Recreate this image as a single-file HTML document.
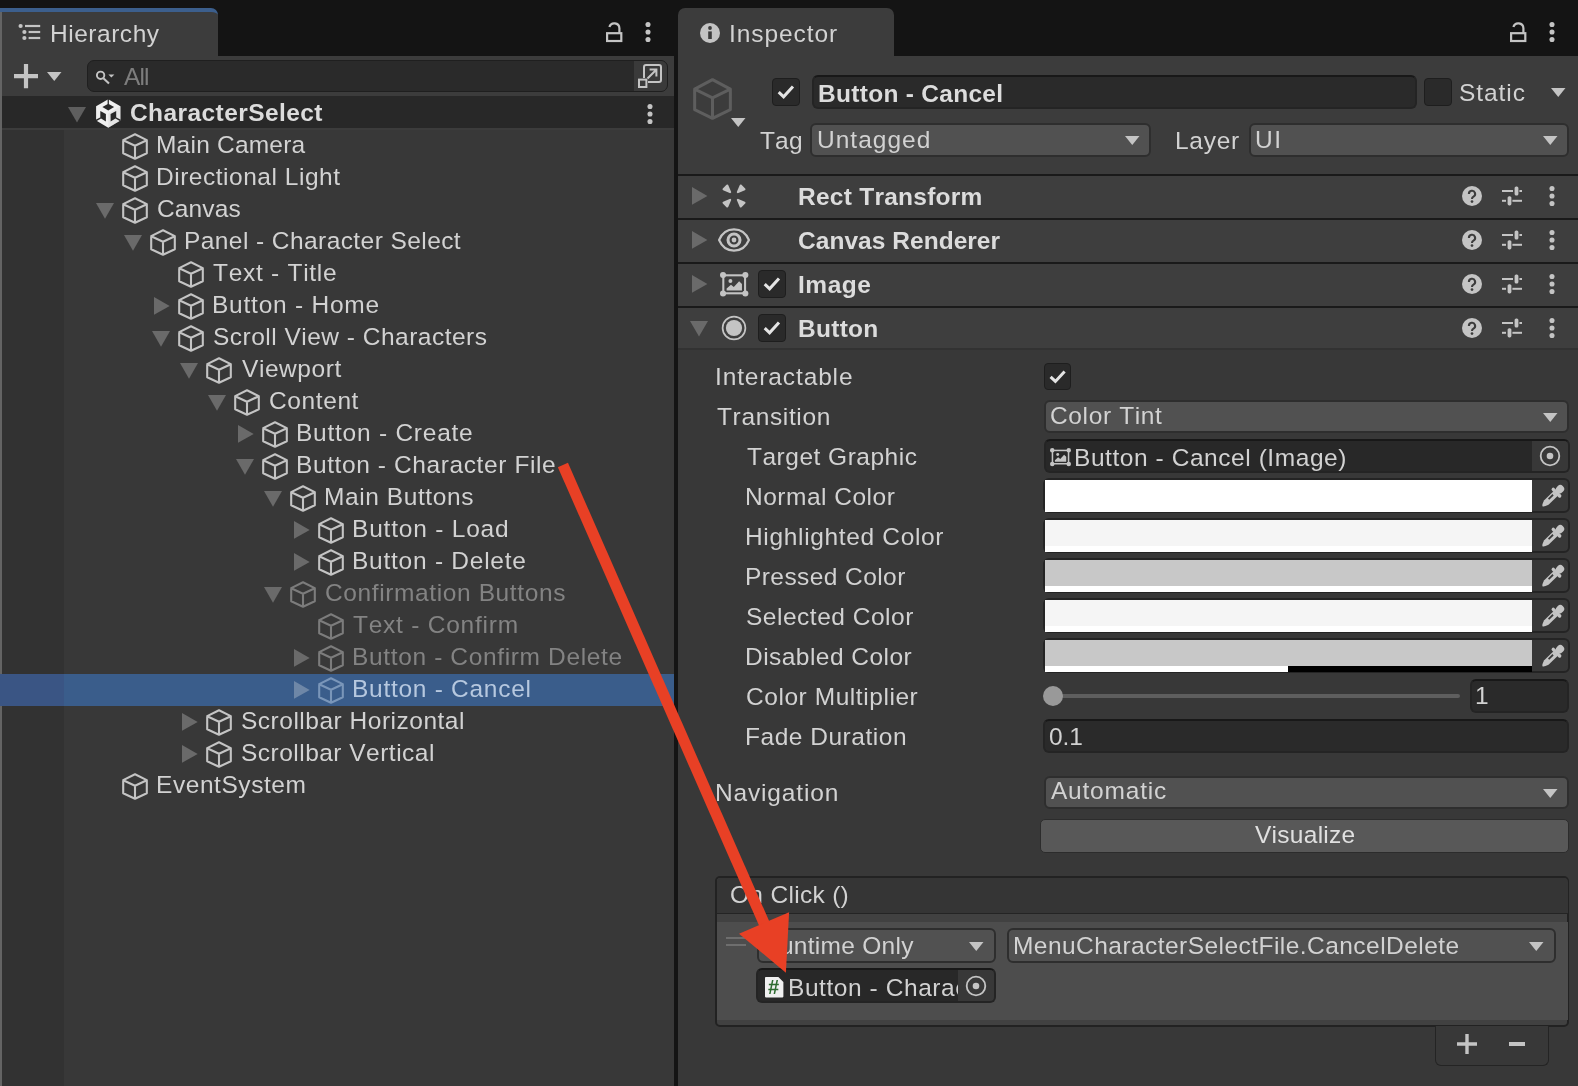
<!DOCTYPE html>
<html><head><meta charset="utf-8"><title>Unity</title>
<style>
html,body{margin:0;padding:0;background:#141414;}
body{width:1578px;height:1086px;position:relative;overflow:hidden;font-family:"Liberation Sans",sans-serif;}
.b{position:absolute;box-sizing:border-box;}
.t{position:absolute;white-space:nowrap;font-kerning:none;will-change:transform;font-family:"Liberation Sans",sans-serif;}
svg{position:absolute;overflow:visible;}
</style></head><body>
<div class="b" style="left:0px;top:0px;width:1578px;height:1086px;background:#141414;"></div>
<div class="b" style="left:0px;top:56px;width:674px;height:1030px;background:#383838;"></div>
<div class="b" style="left:0px;top:8px;width:218px;height:48px;background:#3c3c3c;border-top:4px solid #3c5f8d;border-top-right-radius:7px;"></div>
<div class="b" style="left:0px;top:56px;width:674px;height:40px;background:#3c3c3c;"></div>
<div class="b" style="left:0px;top:96px;width:674px;height:33px;background:#282828;"></div>
<div class="b" style="left:0px;top:128px;width:674px;height:2px;background:#3c3c3c;"></div>
<div class="b" style="left:0px;top:130px;width:64px;height:956px;background:#323232;"></div>
<div class="b" style="left:0px;top:12px;width:2px;height:1074px;background:#646464;"></div>
<div class="b" style="left:678px;top:56px;width:900px;height:1030px;background:#383838;"></div>
<div class="b" style="left:678px;top:8px;width:216px;height:50px;background:#3c3c3c;border-top-left-radius:7px;border-top-right-radius:7px;"></div>
<div class="b" style="left:678px;top:56px;width:900px;height:118px;background:#3c3c3c;"></div>
<svg style="left:18px;top:23px" width="24" height="18" viewBox="0 0 24 18"><g fill="#c4c4c4"><circle cx="2.6" cy="3" r="2.1"/><circle cx="6.4" cy="9" r="2.1"/><circle cx="6.4" cy="15" r="2.1"/><rect x="7" y="1.9" width="15.2" height="2.2"/><rect x="10.6" y="7.9" width="11.6" height="2.2"/><rect x="10.6" y="13.9" width="11.6" height="2.2"/></g></svg>
<div class="t" style="left:50px;top:18px;line-height:32px;font-size:24.5px;letter-spacing:0.528px;color:#d2d2d2;">Hierarchy</div>
<svg style="left:606px;top:22px" width="17" height="21" viewBox="0 0 17 21"><rect x="1.1" y="11.2" width="14.2" height="7.8" fill="none" stroke="#c4c4c4" stroke-width="2.2"/><path d="M3.4,5.0 A5.1,5.1 0 0 1 13.4,6.2 L13.4,11.2" fill="none" stroke="#c4c4c4" stroke-width="2.2"/></svg>
<svg style="left:644px;top:20px" width="8" height="24" viewBox="0 0 8 24"><circle cx="4" cy="4.5" r="2.55" fill="#c4c4c4"/><circle cx="4" cy="12" r="2.55" fill="#c4c4c4"/><circle cx="4" cy="19.5" r="2.55" fill="#c4c4c4"/></svg>
<svg style="left:14px;top:64px" width="24" height="25" viewBox="0 0 24 25"><path d="M12,0 V24.3 M0,12.2 H24" stroke="#c4c4c4" stroke-width="4.2" fill="none"/></svg>
<svg style="left:46.8px;top:72.0px" width="14.5" height="9" viewBox="0 0 14.5 9"><path d="M0,0 L14.5,0 L7.25,9 Z" fill="#c4c4c4"/></svg>
<div class="b" style="left:87px;top:60px;width:581px;height:32px;background:#2a2a2a;border:1.5px solid #1f1f1f;border-radius:7px;"></div>
<div class="b" style="left:633px;top:61px;width:34px;height:30px;background:#3a3a3a;border-left:1.5px solid #2a2a2a;border-radius:0 6px 6px 0;"></div>
<svg style="left:95px;top:66px" width="22" height="20" viewBox="0 0 22 20"><circle cx="5.6" cy="9.3" r="3.7" fill="none" stroke="#c4c4c4" stroke-width="1.9"/><path d="M8.4,12.2 L14,17.4" stroke="#c4c4c4" stroke-width="2.1"/><path d="M13.4,8.4 h6 l-3,3.2 z" fill="#c4c4c4"/></svg>
<div class="t" style="left:124px;top:61px;line-height:32px;font-size:24.5px;letter-spacing:-0.870px;color:#7d7d7d;">All</div>
<svg style="left:637px;top:63px" width="26" height="26" viewBox="0 0 26 26"><g fill="none" stroke="#c4c4c4" stroke-width="2"><path d="M7,15 V4 a2,2 0 0 1 2,-2 H22 a2,2 0 0 1 2,2 V17 a2,2 0 0 1 -2,2 H11"/><rect x="2" y="16.6" width="7.4" height="7.4"/><path d="M10.5,15.5 L19,7 M12.6,6.6 H19.4 V13.4"/></g></svg>
<svg style="left:68.0px;top:107.0px" width="18" height="15.6" viewBox="0 0 18 15.6"><path d="M0,0 L18,0 L9.0,15.6 Z" fill="#5e5e5e"/></svg>
<svg style="left:95.7px;top:99.3px" width="24.5" height="29" viewBox="0 0 24.5 29"><path d="M12.25,0.2 L24.4,7.3 V21.6 L12.25,28.8 L0.1,21.6 V7.3 Z" fill="#f0f0f0"/><path d="M12.25,14.6 V28.8 L24.4,21.6 V7.3 Z" fill="#dadada" opacity="0.5"/><g fill="#282828"><path d="M12.25,4.8 L18.1,8.1 L12.25,11.4 L6.4,8.1 Z"/><path d="M4.3,11.9 L9.9,15.1 V22.4 L4.3,19.1 Z"/><path d="M20.2,11.9 L14.6,15.1 V22.4 L20.2,19.1 Z"/><path d="M11.6,0 h1.3 v5.4 h-1.3 z"/><path d="M-0.3,20.8 L4.6,18.2 L5,19.4 L0.3,22.2 Z"/><path d="M24.8,20.8 L19.9,18.2 L19.5,19.4 L24.2,22.2 Z"/></g></svg>
<div class="t" style="left:130px;top:97px;line-height:32px;font-size:24.5px;letter-spacing:0.416px;color:#dcdcdc;font-weight:bold;">CharacterSelect</div>
<svg style="left:646px;top:102px" width="8" height="24" viewBox="0 0 8 24"><circle cx="4" cy="4.5" r="2.55" fill="#c4c4c4"/><circle cx="4" cy="12" r="2.55" fill="#c4c4c4"/><circle cx="4" cy="19.5" r="2.55" fill="#c4c4c4"/></svg>
<svg style="left:122px;top:132.6px;opacity:1" width="26" height="27" viewBox="0 0 26 27"><path d="M13.00,1.20 L24.80,7.18 L24.80,20.27 L13.00,25.80 L1.20,20.27 L1.20,7.18 Z M1.20,7.18 L13.00,12.81 L24.80,7.18 M13.00,12.81 L13.00,25.80" fill="none" stroke="#c4c4c4" stroke-width="2.1" stroke-linejoin="round" stroke-linecap="round"/></svg>
<div class="t" style="left:156px;top:129px;line-height:32px;font-size:24.5px;letter-spacing:0.216px;color:#d2d2d2;">Main Camera</div>
<svg style="left:122px;top:164.6px;opacity:1" width="26" height="27" viewBox="0 0 26 27"><path d="M13.00,1.20 L24.80,7.18 L24.80,20.27 L13.00,25.80 L1.20,20.27 L1.20,7.18 Z M1.20,7.18 L13.00,12.81 L24.80,7.18 M13.00,12.81 L13.00,25.80" fill="none" stroke="#c4c4c4" stroke-width="2.1" stroke-linejoin="round" stroke-linecap="round"/></svg>
<div class="t" style="left:156px;top:161px;line-height:32px;font-size:24.5px;letter-spacing:0.520px;color:#d2d2d2;">Directional Light</div>
<svg style="left:122px;top:196.6px;opacity:1" width="26" height="27" viewBox="0 0 26 27"><path d="M13.00,1.20 L24.80,7.18 L24.80,20.27 L13.00,25.80 L1.20,20.27 L1.20,7.18 Z M1.20,7.18 L13.00,12.81 L24.80,7.18 M13.00,12.81 L13.00,25.80" fill="none" stroke="#c4c4c4" stroke-width="2.1" stroke-linejoin="round" stroke-linecap="round"/></svg>
<svg style="left:95.8px;top:202.8px" width="18" height="15.8" viewBox="0 0 18 15.8"><path d="M0,0 L18,0 L9.0,15.8 Z" fill="#6a6a6a"/></svg>
<div class="t" style="left:157px;top:193px;line-height:32px;font-size:24.5px;letter-spacing:0.132px;color:#d2d2d2;">Canvas</div>
<svg style="left:150px;top:228.6px;opacity:1" width="26" height="27" viewBox="0 0 26 27"><path d="M13.00,1.20 L24.80,7.18 L24.80,20.27 L13.00,25.80 L1.20,20.27 L1.20,7.18 Z M1.20,7.18 L13.00,12.81 L24.80,7.18 M13.00,12.81 L13.00,25.80" fill="none" stroke="#c4c4c4" stroke-width="2.1" stroke-linejoin="round" stroke-linecap="round"/></svg>
<svg style="left:123.8px;top:234.8px" width="18" height="15.8" viewBox="0 0 18 15.8"><path d="M0,0 L18,0 L9.0,15.8 Z" fill="#6a6a6a"/></svg>
<div class="t" style="left:184px;top:225px;line-height:32px;font-size:24.5px;letter-spacing:0.425px;color:#d2d2d2;">Panel - Character Select</div>
<svg style="left:178px;top:260.6px;opacity:1" width="26" height="27" viewBox="0 0 26 27"><path d="M13.00,1.20 L24.80,7.18 L24.80,20.27 L13.00,25.80 L1.20,20.27 L1.20,7.18 Z M1.20,7.18 L13.00,12.81 L24.80,7.18 M13.00,12.81 L13.00,25.80" fill="none" stroke="#c4c4c4" stroke-width="2.1" stroke-linejoin="round" stroke-linecap="round"/></svg>
<div class="t" style="left:213px;top:257px;line-height:32px;font-size:24.5px;letter-spacing:0.721px;color:#d2d2d2;">Text - Title</div>
<svg style="left:178px;top:292.6px;opacity:1" width="26" height="27" viewBox="0 0 26 27"><path d="M13.00,1.20 L24.80,7.18 L24.80,20.27 L13.00,25.80 L1.20,20.27 L1.20,7.18 Z M1.20,7.18 L13.00,12.81 L24.80,7.18 M13.00,12.81 L13.00,25.80" fill="none" stroke="#c4c4c4" stroke-width="2.1" stroke-linejoin="round" stroke-linecap="round"/></svg>
<svg style="left:154.0px;top:297.0px" width="15.7" height="17.8" viewBox="0 0 15.7 17.8"><path d="M0,0 L15.7,8.9 L0,17.8 Z" fill="#6a6a6a"/></svg>
<div class="t" style="left:212px;top:289px;line-height:32px;font-size:24.5px;letter-spacing:0.762px;color:#d2d2d2;">Button - Home</div>
<svg style="left:178px;top:324.6px;opacity:1" width="26" height="27" viewBox="0 0 26 27"><path d="M13.00,1.20 L24.80,7.18 L24.80,20.27 L13.00,25.80 L1.20,20.27 L1.20,7.18 Z M1.20,7.18 L13.00,12.81 L24.80,7.18 M13.00,12.81 L13.00,25.80" fill="none" stroke="#c4c4c4" stroke-width="2.1" stroke-linejoin="round" stroke-linecap="round"/></svg>
<svg style="left:151.8px;top:330.8px" width="18" height="15.8" viewBox="0 0 18 15.8"><path d="M0,0 L18,0 L9.0,15.8 Z" fill="#6a6a6a"/></svg>
<div class="t" style="left:213px;top:321px;line-height:32px;font-size:24.5px;letter-spacing:0.488px;color:#d2d2d2;">Scroll View - Characters</div>
<svg style="left:206px;top:356.6px;opacity:1" width="26" height="27" viewBox="0 0 26 27"><path d="M13.00,1.20 L24.80,7.18 L24.80,20.27 L13.00,25.80 L1.20,20.27 L1.20,7.18 Z M1.20,7.18 L13.00,12.81 L24.80,7.18 M13.00,12.81 L13.00,25.80" fill="none" stroke="#c4c4c4" stroke-width="2.1" stroke-linejoin="round" stroke-linecap="round"/></svg>
<svg style="left:179.8px;top:362.8px" width="18" height="15.8" viewBox="0 0 18 15.8"><path d="M0,0 L18,0 L9.0,15.8 Z" fill="#6a6a6a"/></svg>
<div class="t" style="left:242px;top:353px;line-height:32px;font-size:24.5px;letter-spacing:0.567px;color:#d2d2d2;">Viewport</div>
<svg style="left:234px;top:388.6px;opacity:1" width="26" height="27" viewBox="0 0 26 27"><path d="M13.00,1.20 L24.80,7.18 L24.80,20.27 L13.00,25.80 L1.20,20.27 L1.20,7.18 Z M1.20,7.18 L13.00,12.81 L24.80,7.18 M13.00,12.81 L13.00,25.80" fill="none" stroke="#c4c4c4" stroke-width="2.1" stroke-linejoin="round" stroke-linecap="round"/></svg>
<svg style="left:207.8px;top:394.8px" width="18" height="15.8" viewBox="0 0 18 15.8"><path d="M0,0 L18,0 L9.0,15.8 Z" fill="#6a6a6a"/></svg>
<div class="t" style="left:269px;top:385px;line-height:32px;font-size:24.5px;letter-spacing:0.602px;color:#d2d2d2;">Content</div>
<svg style="left:262px;top:420.6px;opacity:1" width="26" height="27" viewBox="0 0 26 27"><path d="M13.00,1.20 L24.80,7.18 L24.80,20.27 L13.00,25.80 L1.20,20.27 L1.20,7.18 Z M1.20,7.18 L13.00,12.81 L24.80,7.18 M13.00,12.81 L13.00,25.80" fill="none" stroke="#c4c4c4" stroke-width="2.1" stroke-linejoin="round" stroke-linecap="round"/></svg>
<svg style="left:238.0px;top:425.0px" width="15.7" height="17.8" viewBox="0 0 15.7 17.8"><path d="M0,0 L15.7,8.9 L0,17.8 Z" fill="#6a6a6a"/></svg>
<div class="t" style="left:296px;top:417px;line-height:32px;font-size:24.5px;letter-spacing:0.754px;color:#d2d2d2;">Button - Create</div>
<svg style="left:262px;top:452.6px;opacity:1" width="26" height="27" viewBox="0 0 26 27"><path d="M13.00,1.20 L24.80,7.18 L24.80,20.27 L13.00,25.80 L1.20,20.27 L1.20,7.18 Z M1.20,7.18 L13.00,12.81 L24.80,7.18 M13.00,12.81 L13.00,25.80" fill="none" stroke="#c4c4c4" stroke-width="2.1" stroke-linejoin="round" stroke-linecap="round"/></svg>
<svg style="left:235.8px;top:458.8px" width="18" height="15.8" viewBox="0 0 18 15.8"><path d="M0,0 L18,0 L9.0,15.8 Z" fill="#6a6a6a"/></svg>
<div class="t" style="left:296px;top:449px;line-height:32px;font-size:24.5px;letter-spacing:0.602px;color:#d2d2d2;">Button - Character File</div>
<svg style="left:290px;top:484.6px;opacity:1" width="26" height="27" viewBox="0 0 26 27"><path d="M13.00,1.20 L24.80,7.18 L24.80,20.27 L13.00,25.80 L1.20,20.27 L1.20,7.18 Z M1.20,7.18 L13.00,12.81 L24.80,7.18 M13.00,12.81 L13.00,25.80" fill="none" stroke="#c4c4c4" stroke-width="2.1" stroke-linejoin="round" stroke-linecap="round"/></svg>
<svg style="left:263.8px;top:490.8px" width="18" height="15.8" viewBox="0 0 18 15.8"><path d="M0,0 L18,0 L9.0,15.8 Z" fill="#6a6a6a"/></svg>
<div class="t" style="left:324px;top:481px;line-height:32px;font-size:24.5px;letter-spacing:0.582px;color:#d2d2d2;">Main Buttons</div>
<svg style="left:318px;top:516.6px;opacity:1" width="26" height="27" viewBox="0 0 26 27"><path d="M13.00,1.20 L24.80,7.18 L24.80,20.27 L13.00,25.80 L1.20,20.27 L1.20,7.18 Z M1.20,7.18 L13.00,12.81 L24.80,7.18 M13.00,12.81 L13.00,25.80" fill="none" stroke="#c4c4c4" stroke-width="2.1" stroke-linejoin="round" stroke-linecap="round"/></svg>
<svg style="left:293.9px;top:521.0px" width="15.7" height="17.8" viewBox="0 0 15.7 17.8"><path d="M0,0 L15.7,8.9 L0,17.8 Z" fill="#6a6a6a"/></svg>
<div class="t" style="left:352px;top:513px;line-height:32px;font-size:24.5px;letter-spacing:0.790px;color:#d2d2d2;">Button - Load</div>
<svg style="left:318px;top:548.6px;opacity:1" width="26" height="27" viewBox="0 0 26 27"><path d="M13.00,1.20 L24.80,7.18 L24.80,20.27 L13.00,25.80 L1.20,20.27 L1.20,7.18 Z M1.20,7.18 L13.00,12.81 L24.80,7.18 M13.00,12.81 L13.00,25.80" fill="none" stroke="#c4c4c4" stroke-width="2.1" stroke-linejoin="round" stroke-linecap="round"/></svg>
<svg style="left:293.9px;top:553.0px" width="15.7" height="17.8" viewBox="0 0 15.7 17.8"><path d="M0,0 L15.7,8.9 L0,17.8 Z" fill="#6a6a6a"/></svg>
<div class="t" style="left:352px;top:545px;line-height:32px;font-size:24.5px;letter-spacing:0.748px;color:#d2d2d2;">Button - Delete</div>
<svg style="left:290px;top:580.6px;opacity:1" width="26" height="27" viewBox="0 0 26 27"><path d="M13.00,1.20 L24.80,7.18 L24.80,20.27 L13.00,25.80 L1.20,20.27 L1.20,7.18 Z M1.20,7.18 L13.00,12.81 L24.80,7.18 M13.00,12.81 L13.00,25.80" fill="none" stroke="#7c7c7c" stroke-width="2.1" stroke-linejoin="round" stroke-linecap="round"/></svg>
<svg style="left:263.8px;top:586.8px" width="18" height="15.8" viewBox="0 0 18 15.8"><path d="M0,0 L18,0 L9.0,15.8 Z" fill="#6a6a6a"/></svg>
<div class="t" style="left:325px;top:577px;line-height:32px;font-size:24.5px;letter-spacing:0.613px;color:#838383;">Confirmation Buttons</div>
<svg style="left:318px;top:612.6px;opacity:1" width="26" height="27" viewBox="0 0 26 27"><path d="M13.00,1.20 L24.80,7.18 L24.80,20.27 L13.00,25.80 L1.20,20.27 L1.20,7.18 Z M1.20,7.18 L13.00,12.81 L24.80,7.18 M13.00,12.81 L13.00,25.80" fill="none" stroke="#7c7c7c" stroke-width="2.1" stroke-linejoin="round" stroke-linecap="round"/></svg>
<div class="t" style="left:353px;top:609px;line-height:32px;font-size:24.5px;letter-spacing:0.760px;color:#838383;">Text - Confirm</div>
<svg style="left:318px;top:644.6px;opacity:1" width="26" height="27" viewBox="0 0 26 27"><path d="M13.00,1.20 L24.80,7.18 L24.80,20.27 L13.00,25.80 L1.20,20.27 L1.20,7.18 Z M1.20,7.18 L13.00,12.81 L24.80,7.18 M13.00,12.81 L13.00,25.80" fill="none" stroke="#7c7c7c" stroke-width="2.1" stroke-linejoin="round" stroke-linecap="round"/></svg>
<svg style="left:293.9px;top:649.0px" width="15.7" height="17.8" viewBox="0 0 15.7 17.8"><path d="M0,0 L15.7,8.9 L0,17.8 Z" fill="#6a6a6a"/></svg>
<div class="t" style="left:352px;top:641px;line-height:32px;font-size:24.5px;letter-spacing:0.641px;color:#838383;">Button - Confirm Delete</div>
<div class="b" style="left:0px;top:674px;width:674px;height:32px;background:#3a5d8b;"></div>
<div class="b" style="left:0px;top:674px;width:64px;height:32px;background:#3a5584;"></div>
<svg style="left:318px;top:676.6px;opacity:1" width="26" height="27" viewBox="0 0 26 27"><path d="M13.00,1.20 L24.80,7.18 L24.80,20.27 L13.00,25.80 L1.20,20.27 L1.20,7.18 Z M1.20,7.18 L13.00,12.81 L24.80,7.18 M13.00,12.81 L13.00,25.80" fill="none" stroke="#7a96b9" stroke-width="2.1" stroke-linejoin="round" stroke-linecap="round"/></svg>
<svg style="left:293.9px;top:681.0px" width="15.7" height="17.8" viewBox="0 0 15.7 17.8"><path d="M0,0 L15.7,8.9 L0,17.8 Z" fill="#6e87a7"/></svg>
<div class="t" style="left:352px;top:673px;line-height:32px;font-size:24.5px;letter-spacing:0.720px;color:#b6c8df;">Button - Cancel</div>
<svg style="left:206px;top:708.6px;opacity:1" width="26" height="27" viewBox="0 0 26 27"><path d="M13.00,1.20 L24.80,7.18 L24.80,20.27 L13.00,25.80 L1.20,20.27 L1.20,7.18 Z M1.20,7.18 L13.00,12.81 L24.80,7.18 M13.00,12.81 L13.00,25.80" fill="none" stroke="#c4c4c4" stroke-width="2.1" stroke-linejoin="round" stroke-linecap="round"/></svg>
<svg style="left:182.0px;top:713.0px" width="15.7" height="17.8" viewBox="0 0 15.7 17.8"><path d="M0,0 L15.7,8.9 L0,17.8 Z" fill="#6a6a6a"/></svg>
<div class="t" style="left:241px;top:705px;line-height:32px;font-size:24.5px;letter-spacing:0.509px;color:#d2d2d2;">Scrollbar Horizontal</div>
<svg style="left:206px;top:740.6px;opacity:1" width="26" height="27" viewBox="0 0 26 27"><path d="M13.00,1.20 L24.80,7.18 L24.80,20.27 L13.00,25.80 L1.20,20.27 L1.20,7.18 Z M1.20,7.18 L13.00,12.81 L24.80,7.18 M13.00,12.81 L13.00,25.80" fill="none" stroke="#c4c4c4" stroke-width="2.1" stroke-linejoin="round" stroke-linecap="round"/></svg>
<svg style="left:182.0px;top:745.0px" width="15.7" height="17.8" viewBox="0 0 15.7 17.8"><path d="M0,0 L15.7,8.9 L0,17.8 Z" fill="#6a6a6a"/></svg>
<div class="t" style="left:241px;top:737px;line-height:32px;font-size:24.5px;letter-spacing:0.481px;color:#d2d2d2;">Scrollbar Vertical</div>
<svg style="left:122px;top:772.6px;opacity:1" width="26" height="27" viewBox="0 0 26 27"><path d="M13.00,1.20 L24.80,7.18 L24.80,20.27 L13.00,25.80 L1.20,20.27 L1.20,7.18 Z M1.20,7.18 L13.00,12.81 L24.80,7.18 M13.00,12.81 L13.00,25.80" fill="none" stroke="#c4c4c4" stroke-width="2.1" stroke-linejoin="round" stroke-linecap="round"/></svg>
<div class="t" style="left:156px;top:769px;line-height:32px;font-size:24.5px;letter-spacing:0.559px;color:#d2d2d2;">EventSystem</div>
<svg style="left:700px;top:23px" width="20" height="20" viewBox="0 0 20 20"><circle cx="10" cy="10" r="10" fill="#c4c4c4"/><circle cx="10" cy="5" r="1.9" fill="#3c3c3c"/><rect x="8.2" y="8.4" width="3.6" height="7.6" fill="#3c3c3c"/></svg>
<div class="t" style="left:729px;top:18px;line-height:32px;font-size:24.5px;letter-spacing:0.937px;color:#d2d2d2;">Inspector</div>
<svg style="left:1510px;top:22px" width="17" height="21" viewBox="0 0 17 21"><rect x="1.1" y="11.2" width="14.2" height="7.8" fill="none" stroke="#c4c4c4" stroke-width="2.2"/><path d="M3.4,5.0 A5.1,5.1 0 0 1 13.4,6.2 L13.4,11.2" fill="none" stroke="#c4c4c4" stroke-width="2.2"/></svg>
<svg style="left:1548px;top:20px" width="8" height="24" viewBox="0 0 8 24"><circle cx="4" cy="4.5" r="2.55" fill="#c4c4c4"/><circle cx="4" cy="12" r="2.55" fill="#c4c4c4"/><circle cx="4" cy="19.5" r="2.55" fill="#c4c4c4"/></svg>
<svg style="left:693px;top:78px;opacity:1" width="39" height="42" viewBox="0 0 39 42"><path d="M19.50,1.65 L37.35,11.05 L37.35,31.64 L19.50,40.35 L1.65,31.64 L1.65,11.05 Z M1.65,11.05 L19.50,19.92 L37.35,11.05 M19.50,19.92 L19.50,40.35" fill="none" stroke="#5e5e5e" stroke-width="3.0" stroke-linejoin="round" stroke-linecap="round"/></svg>
<svg style="left:730.8px;top:118.0px" width="14.5" height="9" viewBox="0 0 14.5 9"><path d="M0,0 L14.5,0 L7.25,9 Z" fill="#c4c4c4"/></svg>
<div class="b" style="left:772.3px;top:78px;width:27.5px;height:27.5px;background:#2a2a2a;border:1.5px solid #1e1e1e;border-radius:4px;"></div>
<svg style="left:772.3px;top:78px" width="27.5" height="27.5" viewBox="0 0 27 27"><path d="M6.6,13.8 L11.4,18.4 L20.6,8.4" fill="none" stroke="#e4e4e4" stroke-width="3"/></svg>
<div class="b" style="left:812px;top:75px;width:605px;height:34px;background:#2a2a2a;border:2px solid #242424;border-top-color:#181818;border-radius:6px;"></div>
<div class="t" style="left:818px;top:78px;line-height:32px;font-size:24.5px;letter-spacing:0.289px;color:#dcdcdc;font-weight:bold;">Button - Cancel</div>
<div class="b" style="left:1424px;top:78px;width:27.5px;height:27.5px;background:#2a2a2a;border:1.5px solid #1e1e1e;border-radius:4px;"></div>
<div class="t" style="left:1459px;top:77px;line-height:32px;font-size:24.5px;letter-spacing:0.937px;color:#d2d2d2;">Static</div>
<svg style="left:1551.2px;top:88.0px" width="14.5" height="9" viewBox="0 0 14.5 9"><path d="M0,0 L14.5,0 L7.25,9 Z" fill="#c4c4c4"/></svg>
<div class="t" style="left:760px;top:125px;line-height:32px;font-size:24.5px;letter-spacing:0.156px;color:#d2d2d2;">Tag</div>
<div class="b" style="left:810px;top:123px;width:341px;height:34px;background:#515151;border:2px solid #2e2e2e;border-radius:6px;"></div>
<div class="t" style="left:817px;top:124px;line-height:32px;font-size:24.5px;letter-spacing:1.016px;color:#d2d2d2;">Untagged</div>
<svg style="left:1124.8px;top:136.0px" width="14.5" height="9" viewBox="0 0 14.5 9"><path d="M0,0 L14.5,0 L7.25,9 Z" fill="#c4c4c4"/></svg>
<div class="t" style="left:1175px;top:125px;line-height:32px;font-size:24.5px;letter-spacing:0.733px;color:#d2d2d2;">Layer</div>
<div class="b" style="left:1249px;top:123px;width:320px;height:34px;background:#515151;border:2px solid #2e2e2e;border-radius:6px;"></div>
<div class="t" style="left:1255px;top:124px;line-height:32px;font-size:24.5px;letter-spacing:1.651px;color:#d2d2d2;">UI</div>
<svg style="left:1542.8px;top:136.0px" width="14.5" height="9" viewBox="0 0 14.5 9"><path d="M0,0 L14.5,0 L7.25,9 Z" fill="#c4c4c4"/></svg>
<div class="b" style="left:678px;top:174px;width:900px;height:2px;background:#1a1a1a;"></div>
<div class="b" style="left:678px;top:176px;width:900px;height:42px;background:#3e3e3e;"></div>
<svg style="left:692.3px;top:187.1px" width="15.4" height="17.8" viewBox="0 0 15.4 17.8"><path d="M0,0 L15.4,8.9 L0,17.8 Z" fill="#6a6a6a"/></svg>
<svg style="left:721px;top:183px" width="26" height="26" viewBox="-13 -13 26 26"><g fill="#c4c4c4" stroke="#c4c4c4" stroke-width="2.2" stroke-linejoin="round"><path d="M-3.9,-3.9 L-10.4,-6.7 L-6.7,-10.4 Z" transform="rotate(0)"/><path d="M-3.9,-3.9 L-10.4,-6.7 L-6.7,-10.4 Z" transform="rotate(90)"/><path d="M-3.9,-3.9 L-10.4,-6.7 L-6.7,-10.4 Z" transform="rotate(180)"/><path d="M-3.9,-3.9 L-10.4,-6.7 L-6.7,-10.4 Z" transform="rotate(270)"/></g></svg>
<div class="t" style="left:798px;top:181px;line-height:32px;font-size:24.5px;letter-spacing:0.253px;color:#dcdcdc;font-weight:bold;">Rect Transform</div>
<svg style="left:1462px;top:186px" width="20" height="20" viewBox="0 0 20 20"><circle cx="10" cy="10" r="10" fill="#c4c4c4"/><path d="M6.9,7.9 a3.1,3.1 0 1 1 4.6,2.7 c-1.1,0.6 -1.5,1.1 -1.5,2.3" fill="none" stroke="#3c3c3c" stroke-width="2.1"/><circle cx="10" cy="15.6" r="1.35" fill="#3c3c3c"/></svg>
<svg style="left:1502px;top:186px" width="20" height="20" viewBox="0 0 20 20"><g fill="#c4c4c4"><rect x="0" y="4" width="11" height="2"/><rect x="12.6" y="0.4" width="3.8" height="9.2" rx="1.6"/><rect x="17.4" y="4" width="2.6" height="2"/><rect x="0" y="13.8" width="4" height="2"/><rect x="5.6" y="10.2" width="3.8" height="9.2" rx="1.6"/><rect x="10.4" y="13.8" width="9.6" height="2"/></g></svg>
<svg style="left:1548px;top:184px" width="8" height="24" viewBox="0 0 8 24"><circle cx="4" cy="4.5" r="2.55" fill="#c4c4c4"/><circle cx="4" cy="12" r="2.55" fill="#c4c4c4"/><circle cx="4" cy="19.5" r="2.55" fill="#c4c4c4"/></svg>
<div class="b" style="left:678px;top:218px;width:900px;height:2px;background:#1a1a1a;"></div>
<div class="b" style="left:678px;top:220px;width:900px;height:42px;background:#3e3e3e;"></div>
<svg style="left:692.3px;top:231.1px" width="15.4" height="17.8" viewBox="0 0 15.4 17.8"><path d="M0,0 L15.4,8.9 L0,17.8 Z" fill="#6a6a6a"/></svg>
<svg style="left:717px;top:227px" width="34" height="26" viewBox="-17 -13 34 26"><path d="M-14.9,0 C-9,-14.2 9,-14.2 14.9,0 C9,14.2 -9,14.2 -14.9,0 Z" fill="none" stroke="#c4c4c4" stroke-width="2.2"/><circle cx="0" cy="0" r="6" fill="none" stroke="#c4c4c4" stroke-width="3"/><circle cx="0" cy="0" r="2.4" fill="#c4c4c4"/></svg>
<div class="t" style="left:798px;top:225px;line-height:32px;font-size:24.5px;letter-spacing:0.038px;color:#dcdcdc;font-weight:bold;">Canvas Renderer</div>
<svg style="left:1462px;top:230px" width="20" height="20" viewBox="0 0 20 20"><circle cx="10" cy="10" r="10" fill="#c4c4c4"/><path d="M6.9,7.9 a3.1,3.1 0 1 1 4.6,2.7 c-1.1,0.6 -1.5,1.1 -1.5,2.3" fill="none" stroke="#3c3c3c" stroke-width="2.1"/><circle cx="10" cy="15.6" r="1.35" fill="#3c3c3c"/></svg>
<svg style="left:1502px;top:230px" width="20" height="20" viewBox="0 0 20 20"><g fill="#c4c4c4"><rect x="0" y="4" width="11" height="2"/><rect x="12.6" y="0.4" width="3.8" height="9.2" rx="1.6"/><rect x="17.4" y="4" width="2.6" height="2"/><rect x="0" y="13.8" width="4" height="2"/><rect x="5.6" y="10.2" width="3.8" height="9.2" rx="1.6"/><rect x="10.4" y="13.8" width="9.6" height="2"/></g></svg>
<svg style="left:1548px;top:228px" width="8" height="24" viewBox="0 0 8 24"><circle cx="4" cy="4.5" r="2.55" fill="#c4c4c4"/><circle cx="4" cy="12" r="2.55" fill="#c4c4c4"/><circle cx="4" cy="19.5" r="2.55" fill="#c4c4c4"/></svg>
<div class="b" style="left:678px;top:262px;width:900px;height:2px;background:#1a1a1a;"></div>
<div class="b" style="left:678px;top:264px;width:900px;height:42px;background:#3e3e3e;"></div>
<svg style="left:692.3px;top:275.1px" width="15.4" height="17.8" viewBox="0 0 15.4 17.8"><path d="M0,0 L15.4,8.9 L0,17.8 Z" fill="#6a6a6a"/></svg>
<svg style="left:720px;top:271.8px" width="28.4" height="24.613333333333333" viewBox="0 0 30 26"><rect x="3.5" y="3.5" width="23" height="19" fill="none" stroke="#c4c4c4" stroke-width="2.2"/><g fill="#c4c4c4"><circle cx="3.2" cy="3.2" r="3.2"/><circle cx="26.8" cy="3.2" r="3.2"/><circle cx="3.2" cy="22.8" r="3.2"/><circle cx="26.8" cy="22.8" r="3.2"/><path d="M7,19.6 L7,17.4 L11.6,13.4 L14.6,15.8 L20.2,9.8 L23.2,12.6 L23.2,19.6 Z"/><circle cx="11" cy="9.4" r="2.1"/></g></svg>
<div class="b" style="left:758px;top:270px;width:27.5px;height:27.5px;background:#2a2a2a;border:1.5px solid #1e1e1e;border-radius:4px;"></div>
<svg style="left:758px;top:270px" width="27.5" height="27.5" viewBox="0 0 27 27"><path d="M6.6,13.8 L11.4,18.4 L20.6,8.4" fill="none" stroke="#e4e4e4" stroke-width="3"/></svg>
<div class="t" style="left:798px;top:269px;line-height:32px;font-size:24.5px;letter-spacing:0.517px;color:#dcdcdc;font-weight:bold;">Image</div>
<svg style="left:1462px;top:274px" width="20" height="20" viewBox="0 0 20 20"><circle cx="10" cy="10" r="10" fill="#c4c4c4"/><path d="M6.9,7.9 a3.1,3.1 0 1 1 4.6,2.7 c-1.1,0.6 -1.5,1.1 -1.5,2.3" fill="none" stroke="#3c3c3c" stroke-width="2.1"/><circle cx="10" cy="15.6" r="1.35" fill="#3c3c3c"/></svg>
<svg style="left:1502px;top:274px" width="20" height="20" viewBox="0 0 20 20"><g fill="#c4c4c4"><rect x="0" y="4" width="11" height="2"/><rect x="12.6" y="0.4" width="3.8" height="9.2" rx="1.6"/><rect x="17.4" y="4" width="2.6" height="2"/><rect x="0" y="13.8" width="4" height="2"/><rect x="5.6" y="10.2" width="3.8" height="9.2" rx="1.6"/><rect x="10.4" y="13.8" width="9.6" height="2"/></g></svg>
<svg style="left:1548px;top:272px" width="8" height="24" viewBox="0 0 8 24"><circle cx="4" cy="4.5" r="2.55" fill="#c4c4c4"/><circle cx="4" cy="12" r="2.55" fill="#c4c4c4"/><circle cx="4" cy="19.5" r="2.55" fill="#c4c4c4"/></svg>
<div class="b" style="left:678px;top:306px;width:900px;height:2px;background:#1a1a1a;"></div>
<div class="b" style="left:678px;top:308px;width:900px;height:42px;background:#3e3e3e;"></div>
<svg style="left:690.0px;top:320.7px" width="18" height="15.6" viewBox="0 0 18 15.6"><path d="M0,0 L18,0 L9.0,15.6 Z" fill="#6a6a6a"/></svg>
<svg style="left:721px;top:315px" width="26" height="26" viewBox="0 0 26 26"><circle cx="13" cy="13" r="11.4" fill="none" stroke="#c4c4c4" stroke-width="1.7"/><circle cx="13" cy="13" r="8.1" fill="#c4c4c4"/></svg>
<div class="b" style="left:758px;top:314px;width:27.5px;height:27.5px;background:#2a2a2a;border:1.5px solid #1e1e1e;border-radius:4px;"></div>
<svg style="left:758px;top:314px" width="27.5" height="27.5" viewBox="0 0 27 27"><path d="M6.6,13.8 L11.4,18.4 L20.6,8.4" fill="none" stroke="#e4e4e4" stroke-width="3"/></svg>
<div class="t" style="left:798px;top:313px;line-height:32px;font-size:24.5px;letter-spacing:0.270px;color:#dcdcdc;font-weight:bold;">Button</div>
<svg style="left:1462px;top:318px" width="20" height="20" viewBox="0 0 20 20"><circle cx="10" cy="10" r="10" fill="#c4c4c4"/><path d="M6.9,7.9 a3.1,3.1 0 1 1 4.6,2.7 c-1.1,0.6 -1.5,1.1 -1.5,2.3" fill="none" stroke="#3c3c3c" stroke-width="2.1"/><circle cx="10" cy="15.6" r="1.35" fill="#3c3c3c"/></svg>
<svg style="left:1502px;top:318px" width="20" height="20" viewBox="0 0 20 20"><g fill="#c4c4c4"><rect x="0" y="4" width="11" height="2"/><rect x="12.6" y="0.4" width="3.8" height="9.2" rx="1.6"/><rect x="17.4" y="4" width="2.6" height="2"/><rect x="0" y="13.8" width="4" height="2"/><rect x="5.6" y="10.2" width="3.8" height="9.2" rx="1.6"/><rect x="10.4" y="13.8" width="9.6" height="2"/></g></svg>
<svg style="left:1548px;top:316px" width="8" height="24" viewBox="0 0 8 24"><circle cx="4" cy="4.5" r="2.55" fill="#c4c4c4"/><circle cx="4" cy="12" r="2.55" fill="#c4c4c4"/><circle cx="4" cy="19.5" r="2.55" fill="#c4c4c4"/></svg>
<div class="b" style="left:678px;top:348px;width:900px;height:1.5px;background:#323232;"></div>
<div class="t" style="left:715px;top:361px;line-height:32px;font-size:24.5px;letter-spacing:0.866px;color:#d2d2d2;">Interactable</div>
<div class="b" style="left:1043.5px;top:362.5px;width:27px;height:27px;background:#2a2a2a;border:1.5px solid #1e1e1e;border-radius:4px;"></div>
<svg style="left:1043.5px;top:362.5px" width="27" height="27" viewBox="0 0 27 27"><path d="M6.6,13.8 L11.4,18.4 L20.6,8.4" fill="none" stroke="#e4e4e4" stroke-width="3"/></svg>
<div class="t" style="left:717px;top:401px;line-height:32px;font-size:24.5px;letter-spacing:0.641px;color:#d2d2d2;">Transition</div>
<div class="b" style="left:1044px;top:400px;width:525px;height:33px;background:#515151;border:2px solid #2e2e2e;border-radius:6px;"></div>
<div class="t" style="left:1050px;top:400px;line-height:32px;font-size:24.5px;letter-spacing:0.637px;color:#d2d2d2;">Color Tint</div>
<svg style="left:1542.8px;top:412.5px" width="14.5" height="9" viewBox="0 0 14.5 9"><path d="M0,0 L14.5,0 L7.25,9 Z" fill="#c4c4c4"/></svg>
<div class="t" style="left:747px;top:441px;line-height:32px;font-size:24.5px;letter-spacing:0.500px;color:#d2d2d2;">Target Graphic</div>
<div class="t" style="left:745px;top:481px;line-height:32px;font-size:24.5px;letter-spacing:0.501px;color:#d2d2d2;">Normal Color</div>
<div class="t" style="left:745px;top:521px;line-height:32px;font-size:24.5px;letter-spacing:0.661px;color:#d2d2d2;">Highlighted Color</div>
<div class="t" style="left:745px;top:561px;line-height:32px;font-size:24.5px;letter-spacing:0.424px;color:#d2d2d2;">Pressed Color</div>
<div class="t" style="left:746px;top:601px;line-height:32px;font-size:24.5px;letter-spacing:0.509px;color:#d2d2d2;">Selected Color</div>
<div class="t" style="left:745px;top:641px;line-height:32px;font-size:24.5px;letter-spacing:0.464px;color:#d2d2d2;">Disabled Color</div>
<div class="t" style="left:746px;top:681px;line-height:32px;font-size:24.5px;letter-spacing:0.558px;color:#d2d2d2;">Color Multiplier</div>
<div class="t" style="left:745px;top:721px;line-height:32px;font-size:24.5px;letter-spacing:0.521px;color:#d2d2d2;">Fade Duration</div>
<div class="b" style="left:1043.5px;top:438.5px;width:526px;height:34.8px;background:#282828;border:2px solid #242424;border-top-color:#181818;border-radius:6px;"></div>
<div class="b" style="left:1532px;top:440.5px;width:35.8px;height:30.8px;background:#383838;border-radius:0 4px 4px 0;"></div>
<svg style="left:1050.4px;top:448px" width="21.0" height="18.2" viewBox="0 0 30 26"><rect x="3.5" y="3.5" width="23" height="19" fill="none" stroke="#c4c4c4" stroke-width="2.2"/><g fill="#c4c4c4"><circle cx="3.2" cy="3.2" r="3.2"/><circle cx="26.8" cy="3.2" r="3.2"/><circle cx="3.2" cy="22.8" r="3.2"/><circle cx="26.8" cy="22.8" r="3.2"/><path d="M7,19.6 L7,17.4 L11.6,13.4 L14.6,15.8 L20.2,9.8 L23.2,12.6 L23.2,19.6 Z"/><circle cx="11" cy="9.4" r="2.1"/></g></svg>
<div class="t" style="left:1074px;top:442px;line-height:32px;font-size:24.5px;letter-spacing:0.561px;color:#d2d2d2;">Button - Cancel (Image)</div>
<svg style="left:1538.9px;top:445px" width="22" height="22" viewBox="-1 -1 22 22"><circle cx="10" cy="10" r="9.3" fill="none" stroke="#c4c4c4" stroke-width="1.8"/><circle cx="10" cy="10" r="3.3" fill="#c4c4c4"/></svg>
<div class="b" style="left:1043px;top:478.3px;width:527px;height:35px;background:#383838;border:2px solid #242424;border-radius:6px;"></div>
<div class="b" style="left:1044.7px;top:479.8px;width:487.3px;height:32.2px;background:#ffffff;"></div>
<div class="b" style="left:1044.7px;top:505.8px;width:487.3px;height:6.2px;background:#ffffff;"></div>
<svg style="left:1541.6px;top:484.5px" width="22" height="22" viewBox="0 0 22 22"><g transform="translate(0.5,21.3) rotate(-44.3)" fill="#c4c4c4"><path d="M0,0 Q0.3,-1.5 5.4,-3.1 L18.4,-3.1 L18.4,3.1 L5.4,3.1 Q0.3,1.5 0,0 Z"/><rect x="17.8" y="-6.3" width="3.5" height="12.6" rx="1.7"/><rect x="20.4" y="-3.8" width="8.2" height="7.6" rx="3.5"/><rect x="9.4" y="-1.8" width="6.2" height="1.8" fill="#3a3a3a"/></g></svg>
<div class="b" style="left:1043px;top:518.3px;width:527px;height:35px;background:#383838;border:2px solid #242424;border-radius:6px;"></div>
<div class="b" style="left:1044.7px;top:519.8px;width:487.3px;height:32.2px;background:#f5f5f5;"></div>
<div class="b" style="left:1044.7px;top:545.8px;width:487.3px;height:6.2px;background:#ffffff;"></div>
<svg style="left:1541.6px;top:524.5px" width="22" height="22" viewBox="0 0 22 22"><g transform="translate(0.5,21.3) rotate(-44.3)" fill="#c4c4c4"><path d="M0,0 Q0.3,-1.5 5.4,-3.1 L18.4,-3.1 L18.4,3.1 L5.4,3.1 Q0.3,1.5 0,0 Z"/><rect x="17.8" y="-6.3" width="3.5" height="12.6" rx="1.7"/><rect x="20.4" y="-3.8" width="8.2" height="7.6" rx="3.5"/><rect x="9.4" y="-1.8" width="6.2" height="1.8" fill="#3a3a3a"/></g></svg>
<div class="b" style="left:1043px;top:558.3px;width:527px;height:35px;background:#383838;border:2px solid #242424;border-radius:6px;"></div>
<div class="b" style="left:1044.7px;top:559.8px;width:487.3px;height:32.2px;background:#c8c8c8;"></div>
<div class="b" style="left:1044.7px;top:585.8px;width:487.3px;height:6.2px;background:#ffffff;"></div>
<svg style="left:1541.6px;top:564.5px" width="22" height="22" viewBox="0 0 22 22"><g transform="translate(0.5,21.3) rotate(-44.3)" fill="#c4c4c4"><path d="M0,0 Q0.3,-1.5 5.4,-3.1 L18.4,-3.1 L18.4,3.1 L5.4,3.1 Q0.3,1.5 0,0 Z"/><rect x="17.8" y="-6.3" width="3.5" height="12.6" rx="1.7"/><rect x="20.4" y="-3.8" width="8.2" height="7.6" rx="3.5"/><rect x="9.4" y="-1.8" width="6.2" height="1.8" fill="#3a3a3a"/></g></svg>
<div class="b" style="left:1043px;top:598.3px;width:527px;height:35px;background:#383838;border:2px solid #242424;border-radius:6px;"></div>
<div class="b" style="left:1044.7px;top:599.8px;width:487.3px;height:32.2px;background:#f5f5f5;"></div>
<div class="b" style="left:1044.7px;top:625.8px;width:487.3px;height:6.2px;background:#ffffff;"></div>
<svg style="left:1541.6px;top:604.5px" width="22" height="22" viewBox="0 0 22 22"><g transform="translate(0.5,21.3) rotate(-44.3)" fill="#c4c4c4"><path d="M0,0 Q0.3,-1.5 5.4,-3.1 L18.4,-3.1 L18.4,3.1 L5.4,3.1 Q0.3,1.5 0,0 Z"/><rect x="17.8" y="-6.3" width="3.5" height="12.6" rx="1.7"/><rect x="20.4" y="-3.8" width="8.2" height="7.6" rx="3.5"/><rect x="9.4" y="-1.8" width="6.2" height="1.8" fill="#3a3a3a"/></g></svg>
<div class="b" style="left:1043px;top:638.3px;width:527px;height:35px;background:#383838;border:2px solid #242424;border-radius:6px;"></div>
<div class="b" style="left:1044.7px;top:639.8px;width:487.3px;height:32.2px;background:#c8c8c8;"></div>
<div class="b" style="left:1044.7px;top:665.8px;width:487.3px;height:6.2px;background:#ffffff;"></div>
<div class="b" style="left:1288.3500000000001px;top:665.8px;width:243.65px;height:6.2px;background:#000000;"></div>
<svg style="left:1541.6px;top:644.5px" width="22" height="22" viewBox="0 0 22 22"><g transform="translate(0.5,21.3) rotate(-44.3)" fill="#c4c4c4"><path d="M0,0 Q0.3,-1.5 5.4,-3.1 L18.4,-3.1 L18.4,3.1 L5.4,3.1 Q0.3,1.5 0,0 Z"/><rect x="17.8" y="-6.3" width="3.5" height="12.6" rx="1.7"/><rect x="20.4" y="-3.8" width="8.2" height="7.6" rx="3.5"/><rect x="9.4" y="-1.8" width="6.2" height="1.8" fill="#3a3a3a"/></g></svg>
<div class="b" style="left:1053px;top:694px;width:407px;height:4.2px;background:#5e5e5e;border-radius:2px;"></div>
<svg style="left:1043px;top:686px" width="20" height="20"><circle cx="10" cy="10" r="10" fill="#999999"/></svg>
<div class="b" style="left:1470px;top:679px;width:99px;height:34px;background:#2a2a2a;border:2px solid #242424;border-top-color:#181818;border-radius:6px;"></div>
<div class="t" style="left:1475px;top:680px;line-height:32px;font-size:24.5px;letter-spacing:0.000px;color:#d2d2d2;">1</div>
<div class="b" style="left:1043px;top:719px;width:526px;height:34px;background:#2a2a2a;border:2px solid #242424;border-top-color:#181818;border-radius:6px;"></div>
<div class="t" style="left:1049px;top:721px;line-height:32px;font-size:24.5px;letter-spacing:-0.153px;color:#d2d2d2;">0.1</div>
<div class="t" style="left:715px;top:777px;line-height:32px;font-size:24.5px;letter-spacing:0.837px;color:#d2d2d2;">Navigation</div>
<div class="b" style="left:1044px;top:776px;width:525px;height:33px;background:#515151;border:2px solid #2e2e2e;border-radius:6px;"></div>
<div class="t" style="left:1051px;top:775px;line-height:32px;font-size:24.5px;letter-spacing:0.782px;color:#d2d2d2;">Automatic</div>
<svg style="left:1542.8px;top:788.5px" width="14.5" height="9" viewBox="0 0 14.5 9"><path d="M0,0 L14.5,0 L7.25,9 Z" fill="#c4c4c4"/></svg>
<div class="b" style="left:1040px;top:819px;width:529px;height:34px;background:#585858;border:1.5px solid #2c2c2c;border-radius:5px;"></div>
<div class="t" style="left:1255px;top:819px;line-height:32px;font-size:24.5px;letter-spacing:0.269px;color:#e0e0e0;">Visualize</div>
<div class="b" style="left:715px;top:876px;width:854px;height:151px;background:#414141;border:2px solid #222222;border-radius:5px;"></div>
<div class="b" style="left:716.5px;top:877.5px;width:851px;height:35px;background:#353535;border-radius:4px 4px 0 0;"></div>
<div class="b" style="left:716.5px;top:912.5px;width:851px;height:1.5px;background:#242424;"></div>
<div class="b" style="left:716.5px;top:921.5px;width:851px;height:98.5px;background:#4d4d4d;"></div>
<div class="t" style="left:730px;top:879px;line-height:32px;font-size:24.5px;letter-spacing:0.309px;color:#d2d2d2;">On Click ()</div>
<div class="b" style="left:726px;top:937px;width:20px;height:1.6px;background:#6e6e6e;"></div>
<div class="b" style="left:726px;top:944px;width:20px;height:1.6px;background:#6e6e6e;"></div>
<div class="b" style="left:756.6px;top:928.3px;width:239px;height:35px;background:#515151;border:2px solid #2e2e2e;border-radius:6px;"></div>
<div class="t" style="left:762px;top:930px;line-height:32px;font-size:24.5px;letter-spacing:0.277px;color:#d2d2d2;">Runtime Only</div>
<svg style="left:968.8px;top:941.8px" width="14.5" height="9" viewBox="0 0 14.5 9"><path d="M0,0 L14.5,0 L7.25,9 Z" fill="#c4c4c4"/></svg>
<div class="b" style="left:1006.6px;top:928.3px;width:549px;height:35px;background:#515151;border:2px solid #2e2e2e;border-radius:6px;"></div>
<div class="t" style="left:1013px;top:930px;line-height:32px;font-size:24.5px;letter-spacing:0.451px;color:#d2d2d2;">MenuCharacterSelectFile.CancelDelete</div>
<svg style="left:1528.8px;top:941.8px" width="14.5" height="9" viewBox="0 0 14.5 9"><path d="M0,0 L14.5,0 L7.25,9 Z" fill="#c4c4c4"/></svg>
<div class="b" style="left:756.3px;top:968.2px;width:239.5px;height:35px;background:#282828;border:2px solid #242424;border-top-color:#181818;border-radius:6px;"></div>
<div class="b" style="left:958px;top:970.2px;width:35.8px;height:31px;background:#383838;border-radius:0 4px 4px 0;"></div>
<svg style="left:764.8px;top:976.8px" width="18.4" height="20.4" viewBox="0 0 18.4 20.4"><path d="M0.8,0 H13.4 L18.4,5 V19.6 Q18.4,20.4 17.6,20.4 H0.8 Q0,20.4 0,19.6 V0.8 Q0,0 0.8,0 Z" fill="#f0f0f0"/></svg>
<div class="t" style="left:768px;top:971px;line-height:32px;font-size:20px;letter-spacing:0.000px;color:#2e6b30;font-weight:bold;">#</div>
<div class="b" style="left:785px;top:970.5px;width:173px;height:31px;overflow:hidden;"><div class="t" style="left:3px;top:1.5px;line-height:32px;font-size:24.5px;letter-spacing:0.567px;color:#d2d2d2;">Button - Character File (Menu</div></div>
<svg style="left:965px;top:975.2px" width="22" height="22" viewBox="-1 -1 22 22"><circle cx="10" cy="10" r="9.3" fill="none" stroke="#c4c4c4" stroke-width="1.8"/><circle cx="10" cy="10" r="3.3" fill="#c4c4c4"/></svg>
<div class="b" style="left:1435px;top:1025.5px;width:114px;height:40px;background:#383838;border:1.5px solid #242424;border-top:none;border-radius:0 0 6px 6px;"></div>
<svg style="left:1457px;top:1034px" width="20" height="20" viewBox="0 0 20 20"><path d="M10,0 V20 M0,10 H20" stroke="#c4c4c4" stroke-width="3.4"/></svg>
<div class="b" style="left:1509px;top:1042.3px;width:16px;height:3.4px;background:#c4c4c4;"></div>
<svg style="left:0;top:0" width="1578" height="1086" viewBox="0 0 1578 1086"><path d="M562.9,465 L764.4,924" stroke="#e84025" stroke-width="11" fill="none"/><path d="M739,933.7 L789.1,912.2 L785.9,972.7 Z" fill="#e84025"/></svg>
</body></html>
